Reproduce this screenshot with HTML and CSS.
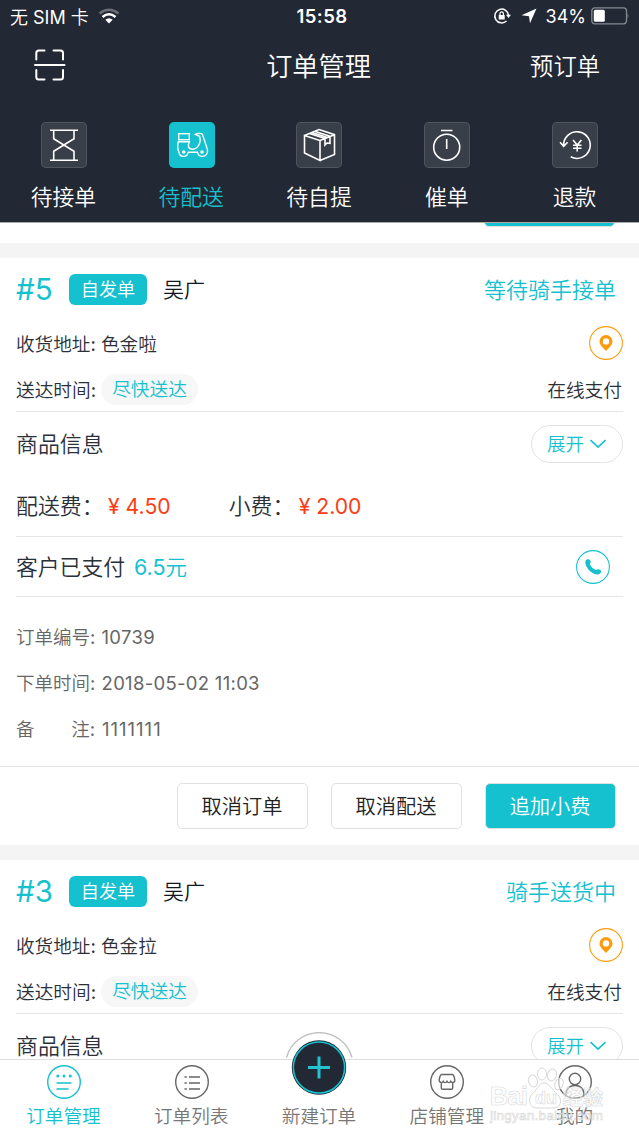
FILE: index.html
```html
<!DOCTYPE html>
<html lang="zh-CN">
<head>
<meta charset="utf-8">
<title>订单管理</title>
<link rel="stylesheet" href="styles.css">
</head>
<body>
<svg class="defs" aria-hidden="true">
  <symbol id="pin" viewBox="0 0 34 34">
    <circle cx="17" cy="17" r="16.4" fill="#fff" stroke="#ff9b0b" stroke-width="1.1"/>
    <path fill="#ff9b0b" fill-rule="evenodd" d="M17 9a6.500 6.500 0 0 0-6.500 6.500c0 4 4.500 7 6.500 9.500 2-2.500 6.500-5.500 6.500-9.500A6.500 6.500 0 0 0 17 9zm0 3.200a3.200 3.200 0 1 1 0 6.400 3.200 3.200 0 0 1 0-6.400z"/>
  </symbol>
  <symbol id="chevron" viewBox="0 0 18 10">
    <path d="M1.500 1.200 9 8.200l7.500-7" fill="none" stroke="#15c1cf" stroke-width="1.600"/>
  </symbol>
</svg>
<div class="app">
  <header class="header">
    <div class="status">
      <div class="status-left">
        <span>无 SIM 卡</span>
        <svg width="22" height="16" viewBox="0 0 22 16" fill="none" stroke-width="2.600">
          <path d="M1.500 5.500Q11-2 20.500 5.500" stroke="#6b6e75"/>
          <path d="M4.500 9Q11 3.500 17.500 9" stroke="#fff"/>
          <path d="M7.300 11.800Q11 8.800 14.700 11.800L11 15.500Z" fill="#fff"/>
        </svg>
      </div>
      <strong class="clock">15:58</strong>
      <div class="status-right">
        <svg width="18" height="18" viewBox="0 0 18 18">
          <path d="M15.600 8.500a6.900 6.900 0 1 0-2.100 5.500" fill="none" stroke="#fff" stroke-width="1.500"/>
          <path d="M13 7.800h5l-2.500 3.200z" fill="#fff"/>
          <rect x="5.700" y="8" width="6" height="4.600" rx=".6" fill="#fff"/>
          <path d="M7 8V6.600a1.700 1.700 0 0 1 3.400 0V8" fill="none" stroke="#fff" stroke-width="1.200"/>
        </svg>
        <svg class="arrow" width="16" height="16" viewBox="0 0 16 16"><path d="M15.500.5 9 15.200 8 8.200.5 7.200z" fill="#fff"/></svg>
        <span class="percent">34%</span>
        <svg class="battery" width="38" height="18" viewBox="0 0 38 18">
          <rect x=".8" y=".8" width="34.700" height="16" rx="3" fill="none" stroke="#85888d" stroke-width="1.300"/>
          <rect x="2.800" y="2.800" width="11" height="12" rx="1.500" fill="#fff"/>
          <path d="M36.600 6q1.600 2.800 0 5.600z" fill="#85888d"/>
        </svg>
      </div>
    </div>
    <div class="nav">
      <svg class="scan" width="32" height="34" viewBox="0 0 32 34" fill="none" stroke="#fff" stroke-width="2" stroke-linecap="round">
        <path d="M2.300 11.500V5Q2.300 2.500 4.800 2.500H10.500M19.500 2.500h7q2.500 0 2.500 2.500v6.500M2.300 22v7q0 2.500 2.500 2.500h5.700M19.500 31.500h7q2.500 0 2.500-2.500v-7M1 17h29.500"/>
      </svg>
      <h1 class="nav-title">订单管理</h1>
      <span class="nav-action">预订单</span>
    </div>
    <nav class="filters">
      <div class="filter">
        <svg class="tile" viewBox="0 0 46 46"><path d="M9 8.300h28M9 38.200h28M12.700 8.300v8.400L33 29.300v8.900M33 8.300v8.400L12.700 29.300v8.900"/></svg>
        <span>待接单</span>
      </div>
      <div class="filter filter-active">
        <svg class="tile" viewBox="0 0 46 46">
          <rect x="9.700" y="11.700" width="10.600" height="6"/>
          <path d="M9.300 19.800h11c-1.600 4-1.300 7.400 3.400 7.400 5.400 0 9-7.500 6.800-12.900l-4.100-1.900c2-1.200 5.800-1.500 7-.1l5 15.100c.8 4-1.500 7-5 7-2.800 0-4.600-1.800-5-4.200H19.200c-.4 2.500-2 4.200-4.500 4.200-2.800 0-4.500-1.800-4.700-4.300-1.600-2.600-1.600-7.700-.7-10.300z"/>
          <circle cx="14.700" cy="30" r="1.100"/><circle cx="33" cy="30" r="1.100"/>
        </svg>
        <span>待配送</span>
      </div>
      <div class="filter">
        <svg class="tile" viewBox="0 0 46 46"><path d="M8.500 13.500 24 18.500v20L8.500 31zM8.500 13.500 23 7.500l15.500 5.200v19.800L24 38.500M24 18.500l14.500-5.800M13.500 11.500l15.500 5M18.500 9.300l15.500 5M16 10.400l15.500 5M29 16.500v6.500l2-2 3 .3v-7"/></svg>
        <span>待自提</span>
      </div>
      <div class="filter">
        <svg class="tile" viewBox="0 0 46 46"><circle cx="22.700" cy="25.200" r="13"/><path d="M17 8.500h11.500M22.700 17v10"/></svg>
        <span>催单</span>
      </div>
      <div class="filter">
        <svg class="tile" viewBox="0 0 46 46"><path d="M11.700 24a13.300 13.300 0 1 1 7 10.800M8 20.300l3.700 4 3.900-4M21 18l4.200 5 4.200-5M25.200 23v6.500M21 23.300h8.500M21 26.300h8.500"/></svg>
        <span>退款</span>
      </div>
    </nav>
  </header>

  <main class="content">
    <div class="previous"><div class="button button-primary"></div></div>

    <article class="order">
      <div class="row order-head">
        <span class="number">#5</span><span class="tag">自发单</span><span class="name">吴广</span>
        <span class="state">等待骑手接单</span>
      </div>
      <div class="row address"><span class="text">收货地址: 色金啦</span><svg class="round-icon"><use href="#pin"/></svg></div>
      <div class="row time"><span class="text">送达时间:</span><span class="soon">尽快送达</span><span class="text payment">在线支付</span></div>
      <div class="row goods"><span class="text">商品信息</span><span class="expand"><span class="text">展开</span><svg class="chevron"><use href="#chevron"/></svg></span></div>
      <div class="row fees">
        <span class="text fee-label">配送费：</span><span class="price">¥ 4.50</span>
        <span class="text fee-label tip">小费：</span><span class="price">¥ 2.00</span>
      </div>
      <div class="row paid">
        <span class="text">客户已支付</span><span class="text paid-sum">6.5元</span>
        <svg class="round-icon phone" viewBox="0 0 34 34">
          <circle cx="17" cy="17" r="16.400" fill="#fff" stroke="#15c1cf" stroke-width="1.100"/>
          <path d="M9.800 10.300c1.200-1.700 4-1.400 4.700.6.400 1.300 0 2.100-.8 2.900.8 2.800 3.700 5.500 6.500 6.300.9-.9 2-1.100 3.200-.7 2 .8 2.300 3.200.4 4.400-2.400 1.500-6.900.3-10.200-3C10.300 17.500 8.300 12.600 9.800 10.300z" fill="#15c1cf"/>
        </svg>
      </div>
      <div class="details">
        <div>订单编号: <span class="digits">10739</span></div>
        <div>下单时间: <span class="digits">2018-05-02 11:03</span></div>
        <div><span class="remark"><span>备</span><span>注:</span></span><span class="digits ones">1111111</span></div>
      </div>
      <div class="actions">
        <span class="button">取消订单</span><span class="button">取消配送</span><span class="button button-primary">追加小费</span>
      </div>
    </article>

    <article class="order">
      <div class="row order-head">
        <span class="number">#3</span><span class="tag">自发单</span><span class="name">吴广</span>
        <span class="state">骑手送货中</span>
      </div>
      <div class="row address"><span class="text">收货地址: 色金拉</span><svg class="round-icon"><use href="#pin"/></svg></div>
      <div class="row time"><span class="text">送达时间:</span><span class="soon">尽快送达</span><span class="text payment">在线支付</span></div>
      <div class="row goods"><span class="text">商品信息</span><span class="expand"><span class="text">展开</span><svg class="chevron"><use href="#chevron"/></svg></span></div>
    </article>
  </main>

  <footer class="tabbar">
    <div class="tab tab-active">
      <svg viewBox="0 0 36 36"><circle cx="18" cy="18" r="16.300"/><path d="M10.500 19h15M10.500 25h12"/><g fill="currentColor" stroke="none"><circle cx="11.800" cy="12" r="1.500"/><circle cx="18" cy="12" r="1.500"/><circle cx="24.300" cy="12" r="1.500"/></g></svg>
      <span>订单管理</span>
    </div>
    <div class="tab">
      <svg viewBox="0 0 36 36"><circle cx="18" cy="18" r="16.300"/><path d="M15 13h11M15 19h11M15 25h11M10.500 13h2.300M10.500 19h2.300M10.500 25h2.300"/></svg>
      <span>订单列表</span>
    </div>
    <div class="tab tab-new">
      <svg class="new-order" viewBox="0 0 72 64">
        <path d="M3.500 26A34 34 0 0 1 69 26z" fill="#fff"/>
        <path d="M3.500 25.500A34 34 0 0 1 69 25.500" fill="none" stroke="#bfbfbf"/>
        <circle cx="36" cy="35.500" r="27.200" fill="#222834"/>
        <circle cx="36" cy="35.500" r="25.600" fill="none" stroke="#15c1cf" stroke-width="1.500"/>
        <path d="M25 35.500h22M36 24.500v22" stroke="#22c3d0" stroke-width="3"/>
      </svg>
      <span>新建订单</span>
    </div>
    <div class="tab">
      <svg viewBox="0 0 36 36"><circle cx="18" cy="18" r="16.300"/><path d="M12.500 10.500h11c1.500 0 2.300 4.500 2.300 6.500-.8 2-3.200 2-4 .3-.8 1.700-3 1.700-3.800 0-.8 1.700-3 1.700-3.800 0-.8 1.700-3.200 1.700-4-.3 0-2 .8-6.500 2.300-6.500zM12.300 19v5q0 1.300 1.300 1.300h8.800q1.300 0 1.300-1.300v-5"/></svg>
      <span>店铺管理</span>
    </div>
    <div class="tab">
      <svg viewBox="0 0 36 36"><circle cx="18" cy="18" r="16.300"/><circle cx="18" cy="15" r="5.700"/><path d="M9 31.500v-2q1-8 9-8t9 8v2"/></svg>
      <span>我的</span>
    </div>
    <div class="watermark">
      <svg width="120" height="60" viewBox="0 0 120 60">
        <g fill="#fff" fill-opacity=".6" stroke="#d8d8d8">
          <ellipse cx="45" cy="17" rx="4.500" ry="6" transform="rotate(-15 45 17)"/>
          <ellipse cx="54" cy="10" rx="4.500" ry="6"/><ellipse cx="64" cy="11" rx="4.500" ry="6" transform="rotate(15 64 11)"/>
          <ellipse cx="71" cy="20" rx="4" ry="6" transform="rotate(20 71 20)"/>
          <path d="M56 19c-5 0-6 6-11 10-6 5-4 15 4 15h17c7 0 9-9 3-14-5-4-7-11-13-11z"/>
        </g>
        <g class="mark-text">
          <text x="2" y="41" font-size="25" textLength="38">Bai</text>
          <text x="47" y="40" font-size="18">du</text>
          <text class="mark-cjk" x="75" y="41" font-size="20">经验</text>
          <text class="mark-url" x="2" y="56" font-size="13.500" textLength="113">jingyan.baidu.com</text>
        </g>
      </svg>
    </div>
  </footer>
</div>
</body>
</html>
```
FILE: styles.css
```css
* { box-sizing: border-box; }
body {
  margin: 0;
  font-family: Inter, "Noto Sans CJK SC DemiLight", "Noto Sans CJK SC", sans-serif;
  font-weight: 400;
  color: #2b2f38;
  background: #fff;
}
.defs { position: absolute; width: 0; height: 0; }
svg { display: block; flex: none; }
.app { width: 639px; height: 1136px; display: flex; flex-direction: column; overflow: hidden; white-space: nowrap; }

.header { height: 222px; flex: none; background: #222834; color: #fff; }
.status { height: 32px; display: grid; grid-template-columns: 1fr auto 1fr; align-items: center; padding: 0 10px; font-size: 18px; }
.status-left, .status-right { display: flex; align-items: center; }
.status-left { gap: 9px; }
.status-left > span { padding-bottom: 1px; }
.status-right { justify-content: flex-end; }
.clock { font-weight: 600; font-size: 18.500px; letter-spacing: .4px; padding-left: 5px; }
.arrow { margin: 0 9px 0 10px; }
.battery { margin-left: 5px; }
.nav { height: 66px; display: grid; grid-template-columns: 1fr auto 1fr; align-items: center; padding: 0 39px 0 34px; }
.nav-title { margin: 0; padding: 0 0 1px 3px; font-size: 26.200px; font-weight: 400; }
.nav-action { justify-self: end; padding-bottom: 1px; font-size: 23.300px; }
.filters { display: flex; padding-top: 24px; }
.filter { flex: 1; display: flex; flex-direction: column; align-items: center; font-size: 21.800px; line-height: 28px; }
.filter > span { margin-top: 15px; padding-right: 1px; }
.tile { width: 46px; height: 46px; border-radius: 5px; background: #393f49; box-shadow: inset 0 0 0 1px #50555e; fill: none; stroke: #fff; stroke-width: 1.600; }
.filter-active { color: #15c1cf; }
.filter-active .tile { background: #15c1cf; box-shadow: none; stroke-width: 1.400; }

.content { flex: 1; min-height: 0; overflow: hidden; }
.previous { height: 21px; padding: 0 24px 16px; display: flex; justify-content: flex-end; align-items: flex-end; overflow: hidden; border-top: 1px solid #aaa; }
.order { border-top: 15px solid #f4f4f4; }
.row { display: flex; align-items: center; margin: 0 16px; }
.text { padding-bottom: 2px; }
.order-head { height: 62px; color: #111722; }
.number { width: 53px; font-size: 29.500px; color: #15c1cf; }
.tag { width: 78px; height: 31px; border-radius: 6px; background: #15c1cf; color: #fff; font-size: 18.200px; line-height: 31px; text-align: center; }
.name { margin-left: 16px; padding-bottom: 2px; font-size: 21px; }
.state { margin: 0 7px 0 auto; padding-bottom: 3px; font-size: 22px; color: #15c1cf; }
.address { height: 46px; font-size: 18.600px; }
.round-icon { width: 34px; height: 34px; margin-left: auto; }
.time { height: 46px; padding-top: 2px; border-bottom: 1px solid #e5e5e5; font-size: 18.700px; }
.soon { height: 31px; margin-left: 5px; padding: 0 11px; border-radius: 16px; background: #f7f7f7; color: #15c1cf; line-height: 32px; }
.payment { margin: 0 1px 0 auto; }
.goods { height: 63px; font-size: 21.900px; }
.expand { width: 92px; height: 38px; margin-left: auto; display: flex; align-items: center; justify-content: center; gap: 5px; border: 1px solid #e3e3e3; border-radius: 19px; color: #15c1cf; font-size: 18.600px; }
.chevron { width: 18px; height: 10px; }
.fees { height: 62px; border-bottom: 1px solid #e5e5e5; font-size: 21.900px; }
.fee-label { width: 92px; }
.price { color: #fc3d14; font-size: 21.200px; }
.tip { margin-left: 58px; width: 70px; }
.paid { height: 60px; border-bottom: 1px solid #e5e5e5; font-size: 21.800px; }
.paid-sum { margin-left: 9px; color: #15c1cf; font-size: 21.500px; }
.phone { margin-right: 13px; }
.details { padding: 17px 16px 14px; font-size: 18.500px; line-height: 46px; color: #666; }
.digits { margin-left: 1px; letter-spacing: .3px; }
.ones { margin-left: 0; letter-spacing: 1px; }
.remark { display: inline-flex; justify-content: space-between; width: 79px; margin-right: 7px; }
.actions { height: 79px; display: flex; align-items: center; justify-content: flex-end; gap: 23px; padding: 0 24px; border-top: 1px solid #e5e5e5; }
.button { flex: none; width: 131px; height: 46px; border: 1px solid #e2e2e2; border-radius: 5px; color: #222; font-size: 20.300px; line-height: 45px; text-align: center; }
.button-primary { background: #15c1cf; color: #fff; }
.actions { padding-right: 23.500px; }

.tabbar { position: relative; height: 77px; flex: none; display: flex; border-top: 1px solid #dedede; background: #fff; }
.tab { flex: 1; padding-top: 4px; display: flex; flex-direction: column; align-items: center; color: #777; font-size: 18.600px; line-height: 24px; }
.tab > svg { width: 36px; height: 36px; margin-bottom: 4px; fill: none; stroke: #666; stroke-width: 1.400; }
.tab > span { padding-right: 1px; }
.tab-active { color: #15c1cf; }
.tab-active > svg { stroke: #15c1cf; }
.tab-new { position: relative; padding-top: 44px; }
.tab > .new-order { position: absolute; top: -28px; left: 27.500px; width: 72px; height: 64px; stroke: none; }
.watermark { position: absolute; right: 31px; bottom: 12px; }
.mark-text { font-family: "Liberation Sans", sans-serif; font-weight: 700; fill: #fff; fill-opacity: .5; stroke: #d8d8d8; stroke-width: .6; }
.mark-cjk { font-family: "Noto Sans CJK SC", sans-serif; }
.mark-url { font-weight: 400; }
```
